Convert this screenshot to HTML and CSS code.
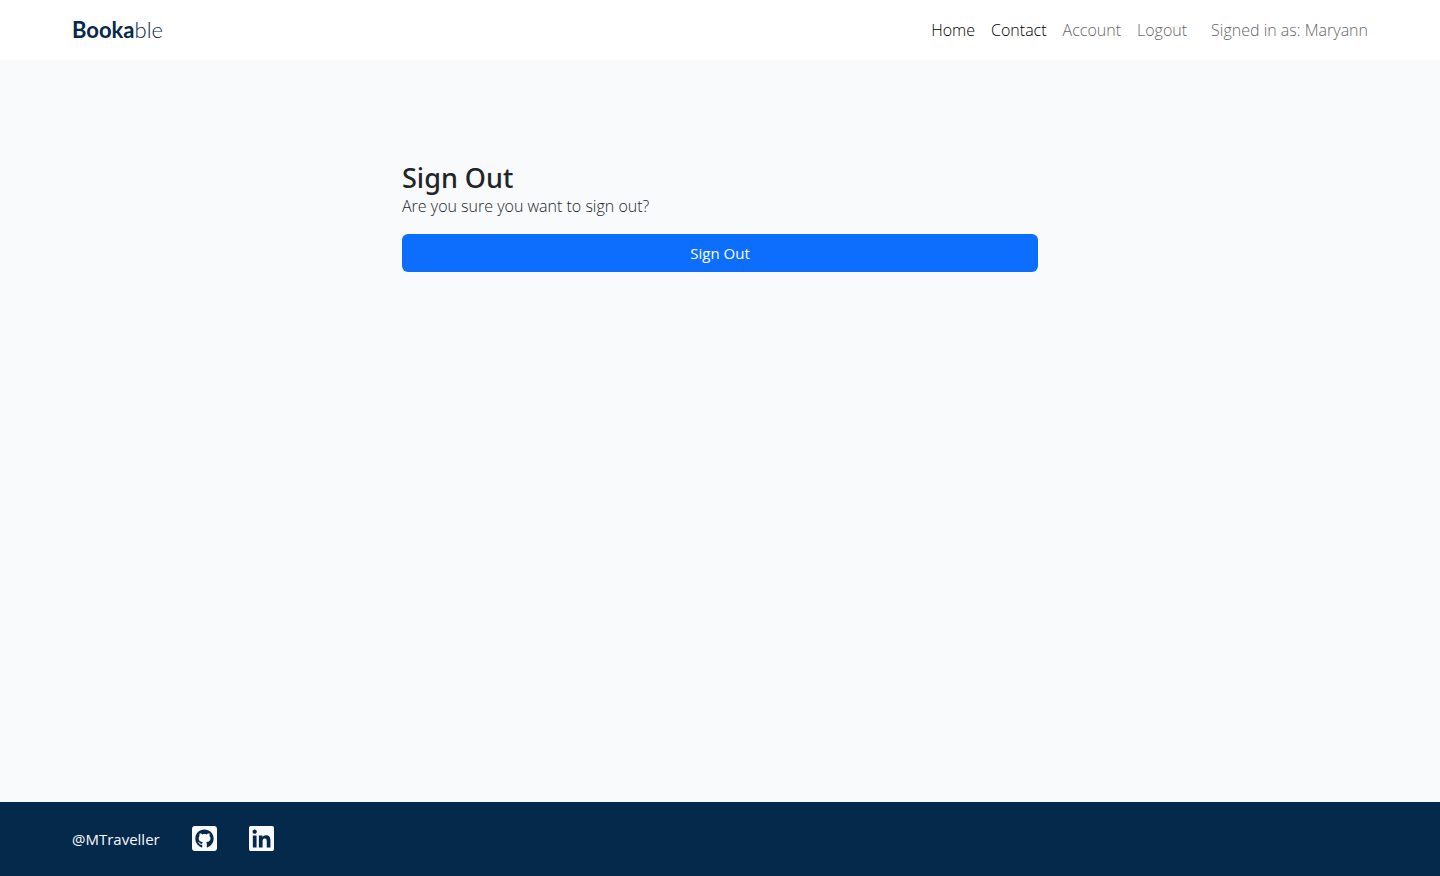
FILE: index.html
```html
<!DOCTYPE html>
<html lang="en">
<head>
<meta charset="utf-8">
<meta name="viewport" content="width=device-width, initial-scale=1">
<title>Sign Out - Bookable</title>
<link rel="stylesheet" href="styles.css">
</head>
<body>
<header class="site-header">
  <div class="container header-row">
    <a class="brand" href="#"><strong>Booka</strong>ble</a>
    <nav class="nav">
      <a class="nav-link active" href="#">Home</a>
      <a class="nav-link active" href="#">Contact</a>
      <a class="nav-link" href="#">Account</a>
      <a class="nav-link" href="#">Logout</a>
      <span class="nav-user">Signed in as: Maryann</span>
    </nav>
  </div>
</header>
<main class="main">
  <form class="panel">
    <h1 class="title">Sign Out</h1>
    <p class="lead">Are you sure you want to sign out?</p>
    <button class="btn" type="submit">Sign Out</button>
  </form>
</main>
<footer class="site-footer">
  <div class="container footer-row">
    <a class="handle" href="#">@MTraveller</a>
    <a class="social" href="#" aria-label="GitHub"><svg viewBox="0 32 448 448"><path d="M400 32H48C21.500 32 0 53.500 0 80v352c0 26.500 21.500 48 48 48h352c26.500 0 48-21.500 48-48V80c0-26.500-21.500-48-48-48zM277.300 415.700c-8.400 1.500-11.500-3.700-11.500-8 0-5.400.2-33 .2-55.300 0-15.600-5.200-25.500-11.300-30.700 37-4.100 76-9.200 76-73.100 0-18.200-6.500-27.300-17.100-39 1.700-4.300 7.400-22-1.700-45-13.900-4.300-45.700 17.900-45.700 17.900-13.200-3.700-27.500-5.600-41.600-5.600-14.100 0-28.400 1.900-41.600 5.600 0 0-31.800-22.200-45.700-17.900-9.100 22.900-3.500 40.600-1.700 45-10.600 11.700-15.600 20.800-15.600 39 0 63.600 37.300 69 74.300 73.100-4.800 4.300-9.100 11.700-10.600 22.300-9.500 4.300-33.800 11.700-48.300-13.900-9.100-15.800-25.500-17.100-25.500-17.100-16.200-.2-1.100 10.200-1.100 10.200 10.800 5 18.400 24.200 18.400 24.200 9.700 29.700 56.100 19.700 56.100 19.700 0 13.900.2 36.500.2 40.600 0 4.300-3 9.500-11.500 8-66-22.100-112.200-84.900-112.200-158.300 0-91.800 70.200-161.500 162-161.500S388 165.600 388 257.400c.1 73.400-44.700 136.300-110.700 158.300z"/></svg></a>
    <a class="social" href="#" aria-label="LinkedIn"><svg viewBox="0 32 448 448"><path d="M416 32H31.900C14.300 32 0 46.500 0 64.300v383.400C0 465.500 14.300 480 31.900 480H416c17.600 0 32-14.500 32-32.300V64.300c0-17.800-14.400-32.300-32-32.300zM135.400 416H69V202.200h66.500V416zm-33.200-243c-21.300 0-38.500-17.300-38.500-38.500S80.900 96 102.200 96c21.200 0 38.500 17.300 38.500 38.500 0 21.300-17.200 38.500-38.500 38.500zm282.100 243h-66.400V312c0-24.800-.5-56.700-34.500-56.700-34.600 0-39.900 27-39.900 54.900V416h-66.400V202.200h63.700v29.200h.9c8.900-16.800 30.600-34.500 62.900-34.500 67.200 0 79.700 44.300 79.700 101.900V416z"/></svg></a>
  </div>
</footer>
</body>
</html>
```
FILE: styles.css
```css
* { box-sizing: border-box; }

body {
  margin: 0;
  min-height: 100vh;
  display: flex;
  flex-direction: column;
  background: #f8fafc;
  color: #212529;
  font-family: "Open Sans", "Noto Sans", sans-serif;
  font-size: 15px;
  line-height: 24px;
}

a { color: inherit; text-decoration: none; }

.container {
  width: 100%;
  max-width: 1320px;
  margin: 0 auto;
  padding: 0 12px;
}

.site-header { background: #fff; }

.header-row {
  display: flex;
  flex-wrap: wrap;
  align-items: center;
  justify-content: space-between;
  min-height: 60px;
}

.brand {
  color: #05294b;
  font-family: Lato, sans-serif;
  font-size: 22px;
  font-weight: 300;
}

.brand strong { font-weight: 700; }

.nav {
  display: flex;
  flex-wrap: wrap;
  gap: 16px;
  color: #666;
  font-size: 16px;
  font-weight: 300;
}

.nav-link.active { color: #000; }

.nav-user { margin-left: 8px; }

.main { flex: 1; padding: 102px 12px 48px; }

.panel {
  width: 100%;
  max-width: 636px;
  margin: 0 auto;
}

.title {
  margin: 0;
  font-family: "Noto Sans", "Open Sans", sans-serif;
  font-size: 27px;
  font-weight: 500;
  line-height: 32px;
}

.lead {
  margin: 0 0 16px;
  font-size: 16px;
  font-weight: 300;
}

.btn {
  display: block;
  width: 100%;
  padding: 7px 12px;
  border: 0;
  border-radius: 6px;
  background: #0d6efd;
  color: #fff;
  font: inherit;
  cursor: pointer;
}

.site-footer { background: #05294b; color: #f8fafc; }

.footer-row {
  display: flex;
  align-items: center;
  gap: 32px;
  padding-top: 24px;
  padding-bottom: 25px;
}

.social svg {
  display: block;
  width: 25px;
  height: 25px;
  fill: currentColor;
}
```
